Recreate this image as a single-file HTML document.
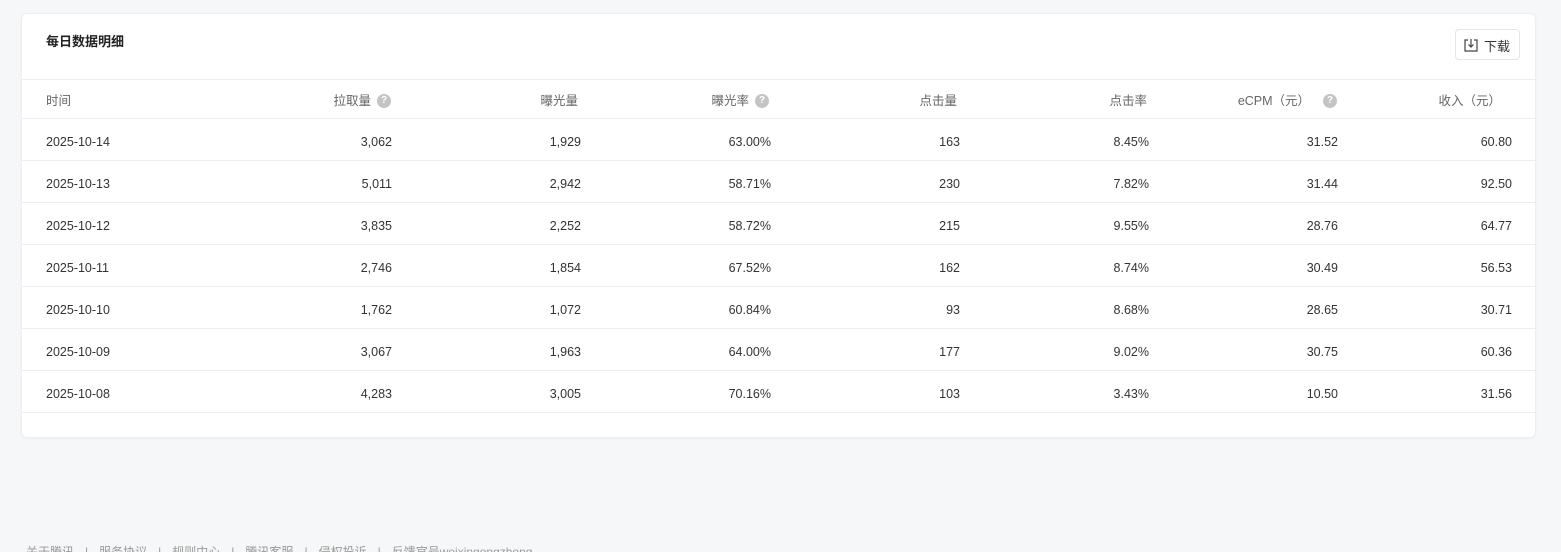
<!DOCTYPE html>
<html><head><meta charset="utf-8"><style>
html,body{margin:0;width:1561px;height:552px;overflow:hidden}
body{background:#f6f7f9;font-family:"Liberation Sans","Noto Sans CJK SC",sans-serif;position:relative}
.card{position:absolute;left:21px;top:13px;width:1513px;height:423px;background:#fff;border:1px solid #eceef1;border-radius:6px;box-shadow:0 1px 2px rgba(0,0,0,.04)}
.title{position:absolute;left:24px;top:17px;font-size:13px;font-weight:bold;color:#222}
.btn{position:absolute;left:1433px;top:15px;width:65px;height:31px;border:1px solid #e3e5e8;border-radius:4px;font-size:13px;color:#333;box-sizing:border-box}
.btn svg{position:absolute;left:8px;top:8px}
.btn span{position:absolute;left:28px;top:6px}
.row{position:absolute;left:0;width:1513px;height:42px;border-top:1px solid #eceef1;font-size:12.5px;color:#333}
.row div{position:absolute;top:16px;white-space:nowrap;display:flex;align-items:center;line-height:14px}
.hd{color:#666}
.hd div{top:14px}
.c0{left:24px}
.q{display:inline-block;width:14px;height:14px;border-radius:50%;background:#c4c4c4;color:#fff;font-size:10px;line-height:14px;text-align:center;font-weight:bold;margin-left:6px}
.foot{position:absolute;left:26px;top:543px;font-size:12px;color:#999;white-space:nowrap}
.foot i{font-style:normal;margin:0 11px}
</style></head><body>
<div class="card">
<div class="title">每日数据明细</div>
<div class="btn"><svg width="14" height="14" viewBox="0 0 14 14" fill="none" stroke="#444" stroke-width="1.2"><path d="M4 2H1v11h12V2h-3"/><path d="M7 1v8M4.5 6.5 7 9l2.5-2.5"/></svg><span>下载</span></div>
<div id="t"></div>
</div>
<div class="foot">关于腾讯<i>|</i>服务协议<i>|</i>规则中心<i>|</i>腾讯客服<i>|</i>侵权投诉<i>|</i>反馈官号weixingongzhong</div>
<script>
var R=[370,559,749,938,1127,1316,1490];
var H=['拉取量?','曝光量','曝光率?','点击量','点击率','eCPM（元）?','收入（元）'];
var D=[['2025-10-14','3,062','1,929','63.00%','163','8.45%','31.52','60.80'],
['2025-10-13','5,011','2,942','58.71%','230','7.82%','31.44','92.50'],
['2025-10-12','3,835','2,252','58.72%','215','9.55%','28.76','64.77'],
['2025-10-11','2,746','1,854','67.52%','162','8.74%','30.49','56.53'],
['2025-10-10','1,762','1,072','60.84%','93','8.68%','28.65','30.71'],
['2025-10-09','3,067','1,963','64.00%','177','9.02%','30.75','60.36'],
['2025-10-08','4,283','3,005','70.16%','103','3.43%','10.50','31.56']];
var h='<div class="row hd" style="top:65px;height:39px"><div class="c0">时间</div>';
var hr=[369,556,747,935,1125,1315,1479];
H.forEach(function(t,i){var q=t.slice(-1)=='?';t=q?t.slice(0,-1):t;
if(i==5)t='eCPM（元）&nbsp;&nbsp;';
h+='<div style="right:'+(1513-hr[i])+'px">'+t+(q?'<span class="q">?</span>':'')+'</div>'});
h+='</div>';
D.forEach(function(r,j){h+='<div class="row" style="top:'+(104+42*j)+'px"><div class="c0">'+r[0]+'</div>';
for(var i=1;i<8;i++)h+='<div style="right:'+(1513-R[i-1])+'px">'+r[i]+'</div>';h+='</div>'});
h+='<div class="row" style="top:398px;height:0"></div>';
document.getElementById('t').innerHTML=h;
</script>
</body></html>
